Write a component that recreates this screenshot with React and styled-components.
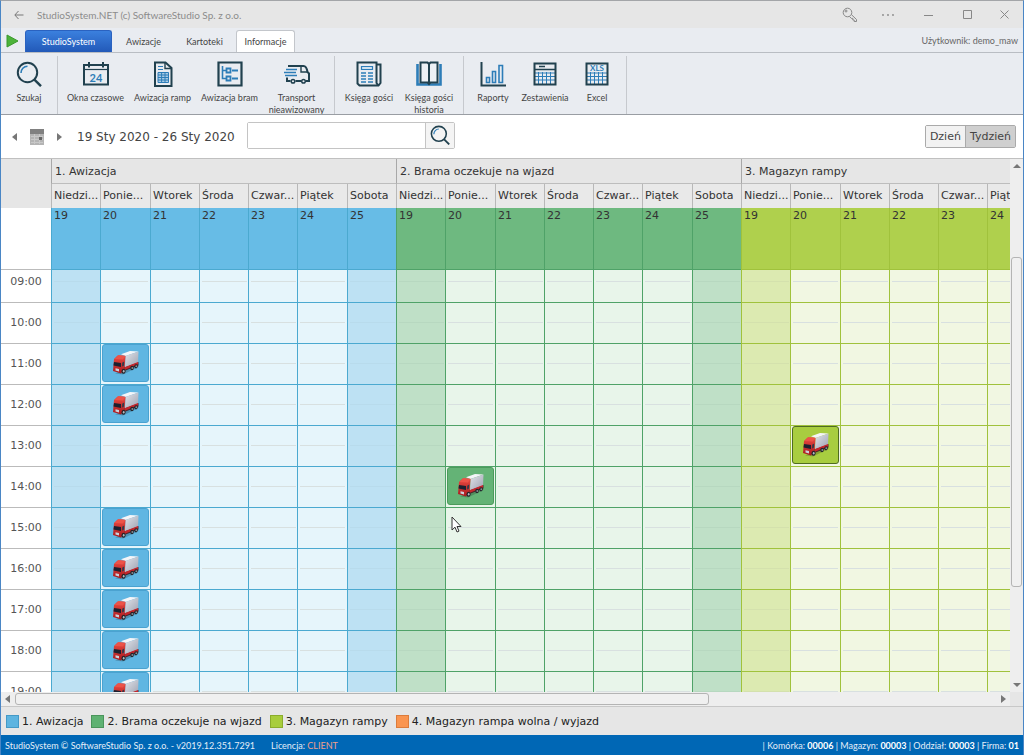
import React, { useLayoutEffect, useRef } from 'react';
import styled, { createGlobalStyle, css } from 'styled-components';

const GlobalStyle = createGlobalStyle`
  * { box-sizing: border-box; }
  body {
    margin: 0;
    font-family: "DejaVu Sans", Verdana, sans-serif;
    font-size: 11px;
    color: #333;
  }
  button, input {
    font-family: inherit;
    font-size: inherit;
    color: inherit;
    margin: 0;
    padding: 0;
  }
`;

const uiFont = css`
  font-family: Lato, "Segoe UI", sans-serif;
  font-size: 9px;
`;

const Window = styled.div`
  display: flex;
  flex-direction: column;
  height: 100vh;
  background: #fff;
  border: 1px solid #4a86c5;
  border-top-color: #a3a5a8;
  border-bottom: 0;
`;

/* title bar */

const TitleBar = styled.header`
  ${uiFont}
  display: flex;
  align-items: center;
  flex: none;
  height: 27px;
  padding: 0 0 0 9px;
  background: #e6e6e6;
  color: #8c8c8c;
`;

const TitleButton = styled.button`
  display: flex;
  align-items: center;
  justify-content: center;
  width: ${p => p.$w || 38}px;
  height: 27px;
  border: 0;
  background: none;
`;

const Title = styled.h1`
  flex: 1;
  margin: 0 0 0 10px;
  font-size: 10px;
  font-weight: 400;
`;

const TitleButtons = styled.div`
  display: flex;
`;

/* ribbon */

const TabBar = styled.nav`
  ${uiFont}
  display: flex;
  align-items: flex-end;
  gap: 2px;
  flex: none;
  height: 25px;
  padding: 0 5px;
  background: #e9ecf1;
  border-bottom: 1px solid #b9bdc3;
`;

const PlayButton = styled.button`
  width: 17px;
  height: 20px;
  border: 0;
  background: none;
  text-align: left;
`;

const Tab = styled.button`
  width: ${p => (p.$main ? 87 : 59)}px;
  height: 22px;
  border: 1px solid transparent;
  border-bottom: 0;
  border-radius: 3px 3px 0 0;
  background: none;
  color: #444;
  ${p => p.$main && css`
    background: linear-gradient(#3b80de, #2259b8);
    border-color: #2a62c0;
    color: #fff;
  `}
  ${p => p.$active && css`
    background: #fff;
    border-color: #c3c6cb;
  `}
`;

const User = styled.span`
  margin-left: auto;
  align-self: center;
  color: #666;
`;

const Ribbon = styled.div`
  ${uiFont}
  display: flex;
  flex: none;
  height: 62px;
  padding: 3px 0 0;
  overflow: hidden;
  background: #e9ecf1;
  border-bottom: 1px solid #999da3;
`;

const RibbonGroup = styled.div`
  display: flex;
  padding: 0 ${p => p.$pad}px;
  border-right: 1px solid #c6c9ce;
`;

const RibbonButton = styled.button`
  display: flex;
  flex-direction: column;
  align-items: center;
  width: ${p => p.$w}px;
  height: 60px;
  padding: 5px 0 0;
  border: 0;
  background: none;
  color: #444;
  line-height: 12px;
  svg {
    flex: none;
    margin-bottom: 5px;
  }
`;

/* date toolbar */

const Toolbar = styled.div`
  display: flex;
  align-items: center;
  flex: none;
  height: 43px;
  padding: 0 7px 0 9px;
  color: #444;
`;

const IconButton = styled.button`
  display: flex;
  align-items: center;
  justify-content: center;
  width: ${p => p.$w}px;
  height: 20px;
  border: 0;
  background: none;
`;

const Period = styled.span`
  width: 170px;
  margin-left: 13px;
  font-size: 12px;
  white-space: nowrap;
`;

const SearchBox = styled.form`
  display: flex;
  width: 208px;
  height: 27px;
  margin-bottom: 3px;
  border: 1px solid #c4c4c4;
  border-radius: 2px;
`;

const SearchInput = styled.input`
  flex: 1;
  min-width: 0;
  padding: 0 6px;
  border: 0;
  outline: 0;
`;

const SearchButton = styled.button`
  display: flex;
  align-items: center;
  justify-content: center;
  width: 29px;
  border: 0;
  border-left: 1px solid #c4c4c4;
  background: #f4f4f4;
`;

const Views = styled.div`
  display: flex;
  margin-left: auto;
  height: 23px;
  border: 1px solid #aaa;
  border-radius: 2px;
`;

const ViewButton = styled.button`
  padding: 0 4px;
  border: 0;
  background: ${p => (p.$active ? '#cfcfcf' : '#f2f2f2')};
  & + & {
    border-left: 1px solid #aaa;
  }
`;

/* scheduler */

const Scheduler = styled.main`
  position: relative;
  display: grid;
  grid-template-columns: minmax(0, 1fr) 13px;
  grid-template-rows: minmax(0, 1fr) 14px;
  flex: 1;
  min-height: 0;
  border-top: 1px solid #c0c0c0;
`;

const Panes = styled.div`
  display: flex;
  flex-direction: column;
  min-width: 0;
  overflow: hidden;
`;

const BodyPane = styled.div`
  flex: 1;
  min-height: 0;
  overflow: hidden;
`;

const Sheet = styled.table`
  table-layout: fixed;
  width: 1085px;
  border-spacing: 0;
  th, td {
    padding: 0;
    font-weight: 400;
    text-align: left;
  }
`;

const Corner = styled.th`
  background: #e6e6e6;
`;

const GroupHead = styled.th`
  height: 25px;
  background: #e6e6e6;
  border-left: 1px solid #a8a8a8;
  border-bottom: 1px solid #bdbdbd;
  && { padding: 0 3px; }
`;

const DayHead = styled.th`
  height: 24px;
  background: #e9e9e9;
  border-left: 1px solid #b8b8b8;
  white-space: nowrap;
  && { padding: 0 0 2px 2px; }
`;

const AllDay = styled.td`
  height: 62px;
  background: ${p => p.$c.solid};
  border-left: 1px solid ${p => p.$c.line};
  border-bottom: 1px solid ${p => p.$c.line};
  vertical-align: top;
  line-height: 15px;
  && { padding: 0 2px; }
`;

const AllDayGutter = styled.td`
  border-bottom: 1px solid #bbb;
`;

const Hour = styled.th`
  height: 41px;
  border-bottom: 1px solid #bbb;
  color: #555;
  && {
    padding-bottom: 2px;
    text-align: center;
  }
`;

const Slot = styled.td`
  height: 41px;
  vertical-align: top;
  border-left: 1px solid ${p => p.$c.line};
  border-bottom: 1px solid ${p => p.$c.line};
  background:
    linear-gradient(${p => (p.$weekend ? p.$c.faint : '#d8e0e0')} 1px, transparent 1px) 2px 19px / 45px 22px no-repeat,
    ${p => (p.$weekend ? p.$c.weekend : p.$c.weekday)};
`;

const Event = styled.button`
  display: flex;
  align-items: center;
  justify-content: center;
  width: 47px;
  height: 38px;
  margin: 0 1px;
  border: 1px solid ${p => p.$c.eventLine};
  border-radius: 3px;
  background: ${p => p.$c.event};
`;

const ScrollBar = styled.div`
  display: flex;
  flex-direction: ${p => (p.$vertical ? 'column' : 'row')};
  align-items: center;
  background: #eee;
`;

const ScrollArrow = styled.button`
  display: flex;
  align-items: center;
  justify-content: center;
  flex: none;
  width: 14px;
  height: 14px;
  border: 0;
  background: none;
`;

const Gap = styled.span`
  flex: ${p => p.$n};
`;

const Thumb = styled.span`
  flex: ${p => p.$n};
  align-self: stretch;
  margin: ${p => (p.$vertical ? '0 1px' : '1px 0')};
  border: 1px solid #b4b4b4;
  border-radius: 3px;
  background: #f0f0f0;
`;

const ScrollCorner = styled.div`
  background: #e6e6e6;
`;

const Pointer = styled.svg`
  position: absolute;
  left: 450px;
  top: 357px;
`;

/* bottom */

const Legend = styled.ul`
  display: flex;
  align-items: center;
  gap: 8px;
  flex: none;
  height: 29px;
  margin: 0;
  padding: 0 5px;
  list-style: none;
  background: #e6e6e6;
  border-top: 1px solid #c8c8c8;
  color: #222;
`;

const LegendItem = styled.li`
  display: flex;
  align-items: center;
  gap: 3px;
`;

const Swatch = styled.span`
  width: 13px;
  height: 13px;
  border: 1px solid ${p => p.$line};
  background: ${p => p.$fill};
`;

const StatusBar = styled.footer`
  ${uiFont}
  display: flex;
  align-items: center;
  gap: 16px;
  flex: none;
  height: 20px;
  padding: 0 4px;
  background: #0067b5;
  color: #e4eef8;
`;

const License = styled.b`
  font-weight: 400;
  color: #f0a08c;
`;

const Company = styled.span`
  margin-left: auto;
  b {
    font-weight: 700;
    color: #fff;
  }
`;

const palettes = [
  { solid: '#67bce6', weekday: '#e6f5fb', weekend: '#bde1f3', faint: '#b8dbec', line: '#4ba9d0', event: '#60b6e2', eventLine: '#4ba2d0' },
  { solid: '#6eb980', weekday: '#e8f5ea', weekend: '#bfe0c7', faint: '#b7d8c0', line: '#4fa268', event: '#64b376', eventLine: '#4c9a5c' },
  { solid: '#afd04d', weekday: '#f1f7e2', weekend: '#dceab1', faint: '#d4e1ad', line: '#a0c23c', event: '#a8cd40', eventLine: '#4f6b22' },
];

const groups = ['1. Awizacja', '2. Brama oczekuje na wjazd', '3. Magazyn rampy'];

const days = [
  { name: 'Niedzi...', date: 19, width: 49, weekend: true },
  { name: 'Ponie...', date: 20, width: 50 },
  { name: 'Wtorek', date: 21, width: 49 },
  { name: 'Środa', date: 22, width: 49 },
  { name: 'Czwar...', date: 23, width: 49 },
  { name: 'Piątek', date: 24, width: 50 },
  { name: 'Sobota', date: 25, width: 49, weekend: true },
];

const hours = [9, 10, 11, 12, 13, 14, 15, 16, 17, 18, 19];

// hours of the Monday deliveries, per group
const deliveries = [[11, 12, 15, 16, 17, 18, 19], [14], [13]];

const legend = [
  ['1. Awizacja', '#5db4e0', '#4499c6'],
  ['2. Brama oczekuje na wjazd', '#5fb272', '#4a955b'],
  ['3. Magazyn rampy', '#a8cd3c', '#8bad2c'],
  ['4. Magazyn rampa wolna / wyjazd', '#fa9550', '#dc7c3c'],
];

const dark = '#21414f';
const blue = '#2d7db8';

const SearchIcon = ({ size = 26 }) => (
  <svg width={size} height={size} viewBox="0 0 26 26" fill="none">
    <circle cx="11.5" cy="11.5" r="9.7" stroke={dark} strokeWidth="2" />
    <path d="M5 12a6.6 6.6 0 0 1 6.5-6.8" stroke={blue} strokeWidth="1.6" />
    <path d="M18.4 18.6L25 25.2" stroke={dark} strokeWidth="2.4" />
  </svg>
);

const CalendarIcon = () => (
  <svg width="26" height="26" viewBox="0 0 26 26" fill="none">
    <path d="M1 4h24v19.5H1z" stroke={dark} strokeWidth="2" />
    <path d="M1 8.5h24" stroke={dark} strokeWidth="1.2" />
    <path d="M6 1v5.5M20 1v5.5" stroke={dark} strokeWidth="2" />
    <text x="13" y="20.5" textAnchor="middle" fontSize="11" fontWeight="700" fill={blue}>24</text>
  </svg>
);

const DocumentIcon = () => (
  <svg width="26" height="26" viewBox="0 0 26 26" fill="none">
    <path d="M5 1.5h10.500l6 5.500V25H5z" stroke={dark} strokeWidth="2" />
    <path d="M15 2v5.500h6" stroke={dark} strokeWidth="1.4" />
    <path d="M8 5.5h5M8 8.5h5" stroke={blue} strokeWidth="1.2" />
    <path d="M8 11.5h10.500v10H8zM8 14h10.500M8 16.5h10.500M8 19h10.500M11.6 11.5v10M15 11.5v10" fill="#a9cbe4" stroke={blue} strokeWidth="1" />
  </svg>
);

const TreeIcon = () => (
  <svg width="26" height="26" viewBox="0 0 26 26" fill="none">
    <path d="M1.5 1.5h23v23h-23z" stroke={dark} strokeWidth="2.2" />
    <path d="M5.5 5v12.5H9M5.5 9.5H9" stroke={blue} strokeWidth="1.6" />
    <path d="M9.5 7.5h4v4h-4zM9.5 15.5h4v4h-4z" stroke={blue} strokeWidth="1.8" />
    <path d="M15 9.5h6M15 17.5h6" stroke={blue} strokeWidth="1.8" />
  </svg>
);

const VanIcon = () => (
  <svg width="26" height="26" viewBox="0 0 26 26" fill="none">
    <path d="M4 5h15.5c2.5 0 3.5 3 4 6l1.5 1.5V20h-3M3 16.5V20h3.5M11.5 20H17" stroke={dark} strokeWidth="2" />
    <path d="M17 5.5V11h6.5" stroke={dark} strokeWidth="1.4" />
    <circle cx="9" cy="20.2" r="1.8" stroke={dark} strokeWidth="1.5" />
    <circle cx="19.5" cy="20.2" r="1.8" stroke={dark} strokeWidth="1.5" />
    <path d="M2 8.5h11M0 11.5h12M1 14.5h12" stroke={blue} strokeWidth="1.6" />
  </svg>
);

const NewsIcon = () => (
  <svg width="26" height="26" viewBox="0 0 26 26" fill="none">
    <path d="M20.5 3.5h4V22l-2 2.5h-19l-2-2v-21h19V22l2 2.5" stroke={dark} strokeWidth="2" />
    <path d="M5.5 5.5h11v3h-11z" stroke={blue} strokeWidth="1.2" fill="#d0e2f0" />
    <path d="M5 12h5M12 12h5M5 15h5M12 15h5M5 18h5M12 18h5M5 21h5M12 21h5" stroke={blue} strokeWidth="1.4" />
  </svg>
);

const BookIcon = () => (
  <svg width="26" height="26" viewBox="0 0 26 26" fill="none">
    <path d="M1.5 3v20.5h23V3" stroke={blue} strokeWidth="2.6" />
    <path d="M4.5 1.5h7L13 3l1.5-1.5h7v20h-7L13 23l-1.5-1.5h-7zM13 3v20" stroke={dark} strokeWidth="2" fill="#edf1f5" />
  </svg>
);

const ChartIcon = () => (
  <svg width="26" height="26" viewBox="0 0 26 26" fill="none">
    <path d="M1.5 1v23.5H26" stroke={dark} strokeWidth="2" />
    <path d="M6.5 16.5h3v5h-3zM12.5 10.5h3v11h-3zM19 4.5h3.5v17H19z" stroke={blue} strokeWidth="1.6" />
  </svg>
);

const TableIcon = ({ xls }) => (
  <svg width="26" height="26" viewBox="0 0 26 26" fill="none">
    <path d="M3 12h20M3 15.5h20M3 19h20M6.5 11v12M10.5 11v12M14.5 11v12M18.5 11v12" stroke={blue} strokeWidth="1" />
    <path d="M2.5 2.5h21v21h-21z" stroke={dark} strokeWidth="2" />
    {xls
      ? <text x="13" y="10" textAnchor="middle" fontSize="8" fontWeight="700" fill={blue}>XLS</text>
      : <path d="M3 8.5h20M7 5.5h6" stroke={dark} strokeWidth="1.4" />}
  </svg>
);

const TruckIcon = () => (
  <svg width="28" height="26" viewBox="0 0 28 26">
    <defs>
      <linearGradient id="trailer" x1="0" y1="0" x2="1" y2="1">
        <stop offset="0" stopColor="#e2e4ea" />
        <stop offset="1" stopColor="#9da2b1" />
      </linearGradient>
      <linearGradient id="cab" x1="0" y1="0" x2="0" y2="1">
        <stop offset="0" stopColor="#ea4a40" />
        <stop offset="1" stopColor="#a81a20" />
      </linearGradient>
    </defs>
    <path d="M3 23.5l8 1 15.500-7.500-1-3z" fill="#000" opacity=".2" />
    <path d="M11 21.500l15.500-6V12L12 17z" fill="#43262b" />
    <path d="M9 4.200L18 1l8.500.6L13.500 6z" fill="#f4f5f8" />
    <path d="M13.500 6L26.500 1.600 26 12.500l-13 4.800z" fill="url(#trailer)" />
    <path d="M12.500 17.300L26 12v2.200L12.500 20z" fill="#c4262c" />
    <path d="M2 9l3.500-3.500L13.500 6l-1 13-3.500 4.500-8-2.500z" fill="url(#cab)" />
    <path d="M2.500 9L6.500 5l7 .8-2.500 3.700z" fill="#ec5348" />
    <path d="M2 12l7 1v4l-7.500-1.500z" fill="#1b2130" />
    <path d="M10.200 12.800l2-1.200-.2 4-1.900 1z" fill="#323a49" />
    <path d="M3.500 18.300l3.500.8v2.300l-3.500-.9z" fill="#ccd0da" />
    <ellipse cx="11.500" cy="21.300" rx="2" ry="2.500" fill="#22242a" />
    <ellipse cx="11.700" cy="21.300" rx=".9" ry="1.200" fill="#b5b8bf" />
    <ellipse cx="20" cy="18" rx="1.700" ry="2.200" fill="#22242a" />
    <ellipse cx="24" cy="16.300" rx="1.600" ry="2.100" fill="#22242a" />
    <ellipse cx="20.200" cy="18" rx=".7" ry="1" fill="#a5a8b0" />
    <ellipse cx="24.200" cy="16.300" rx=".7" ry="1" fill="#a5a8b0" />
  </svg>
);

const arrowPaths = {
  left: 'M6 0v8L1 4z',
  right: 'M2 0v8l5-4z',
  up: 'M0 6h8L4 2z',
  down: 'M0 2h8L4 6z',
};

const Arrow = ({ dir }) => (
  <svg width="8" height="8" viewBox="0 0 8 8"><path d={arrowPaths[dir]} fill="#777" /></svg>
);

const ribbon = [
  { pad: 0, w: 56, items: [['Szukaj', SearchIcon]] },
  { pad: 4, w: 67, items: [['Okna czasowe', CalendarIcon], ['Awizacja ramp', DocumentIcon], ['Awizacja bram', TreeIcon], ['Transport nieawizowany', VanIcon]] },
  { pad: 4, w: 60, items: [['Księga gości', NewsIcon], ['Księga gości historia', BookIcon]] },
  { pad: 3, w: 52, items: [['Raporty', ChartIcon], ['Zestawienia', TableIcon], ['Excel', () => <TableIcon xls />]] },
];

const Columns = () => (
  <colgroup>
    <col width="50" />
    {groups.map(g => days.map(d => <col key={g + d.date} width={d.width} />))}
  </colgroup>
);

const Header = () => (
  <Sheet>
    <Columns />
    <thead>
      <tr>
        <Corner rowSpan={2} />
        {groups.map(g => <GroupHead key={g} colSpan={7}>{g}</GroupHead>)}
      </tr>
      <tr>
        {groups.map(g => days.map(d => <DayHead key={g + d.date}>{d.name}</DayHead>))}
      </tr>
    </thead>
    <tbody>
      <tr>
        <AllDayGutter />
        {groups.map((g, i) => days.map(d => (
          <AllDay key={g + d.date} $c={palettes[i]}>{d.date}</AllDay>
        )))}
      </tr>
    </tbody>
  </Sheet>
);

const Body = () => {
  const pane = useRef(null);

  useLayoutEffect(() => {
    pane.current.scrollTop = 8;
  }, []);

  return (
    <BodyPane ref={pane}>
      <Sheet>
        <Columns />
        <tbody>
          {hours.map(h => (
            <tr key={h}>
              <Hour scope="row">{String(h).padStart(2, '0')}:00</Hour>
              {groups.map((g, i) => days.map(d => (
                <Slot key={g + d.date} $c={palettes[i]} $weekend={d.weekend}>
                  {d.date === 20 && deliveries[i].includes(h) && (
                    <Event $c={palettes[i]} aria-label={g}><TruckIcon /></Event>
                  )}
                </Slot>
              )))}
            </tr>
          ))}
        </tbody>
      </Sheet>
    </BodyPane>
  );
};

export default function App() {
  return (
    <Window>
      <GlobalStyle />
      <TitleBar>
        <TitleButton $w={17} aria-label="Wstecz">
          <svg width="10" height="10" viewBox="0 0 10 10" fill="none" stroke="#777">
            <path d="M9.5 5H1M4.5 1L.8 5l3.7 4" />
          </svg>
        </TitleButton>
        <Title>StudioSystem.NET (c) SoftwareStudio Sp. z o.o.</Title>
        <TitleButtons>
          <TitleButton aria-label="Klucz">
            <svg width="16" height="16" viewBox="0 0 16 16" fill="none" stroke="#888">
              <circle cx="5.5" cy="5.5" r="4.3" />
              <circle cx="4" cy="4" r="1" />
              <path d="M9.3 7.5l5.2 5v2h-2.3V13h-1.4v-1.600H9.300L7.500 9.500" />
            </svg>
          </TitleButton>
          <TitleButton aria-label="Więcej">
            <svg width="14" height="4" viewBox="0 0 14 4" fill="#888">
              <circle cx="2" cy="2" r=".9" /><circle cx="7" cy="2" r=".9" /><circle cx="12" cy="2" r=".9" />
            </svg>
          </TitleButton>
          <TitleButton $w={42} aria-label="Minimalizuj">
            <svg width="9" height="9" viewBox="0 0 9 9" stroke="#888"><path d="M0 5.5h9" /></svg>
          </TitleButton>
          <TitleButton $w={36} aria-label="Maksymalizuj">
            <svg width="9" height="9" viewBox="0 0 9 9" fill="none" stroke="#888"><path d="M.5.5h8v8h-8z" /></svg>
          </TitleButton>
          <TitleButton aria-label="Zamknij">
            <svg width="9" height="9" viewBox="0 0 9 9" stroke="#888"><path d="M.5.5l8 8M8.5.5l-8 8" /></svg>
          </TitleButton>
        </TitleButtons>
      </TitleBar>

      <TabBar>
        <PlayButton aria-label="Start">
          <svg width="13" height="14" viewBox="0 0 13 14">
            <path d="M1 1l11 6L1 13z" fill="#4db33a" stroke="#3a9a2c" />
          </svg>
        </PlayButton>
        <Tab $main>StudioSystem</Tab>
        <Tab>Awizacje</Tab>
        <Tab>Kartoteki</Tab>
        <Tab $active>Informacje</Tab>
        <User>Użytkownik: demo_maw</User>
      </TabBar>

      <Ribbon>
        {ribbon.map(group => (
          <RibbonGroup key={group.w} $pad={group.pad}>
            {group.items.map(([label, Icon]) => (
              <RibbonButton key={label} $w={group.w}><Icon />{label}</RibbonButton>
            ))}
          </RibbonGroup>
        ))}
      </Ribbon>

      <Toolbar>
        <IconButton $w={10} aria-label="Poprzedni tydzień"><Arrow dir="left" /></IconButton>
        <IconButton $w={34} aria-label="Kalendarz">
          <svg width="14" height="16" viewBox="0 0 14 16">
            <path d="M0 0h14v16H0z" fill="#b4b4b4" />
            <path d="M0 0h14v5H0z" fill="#808080" />
            <path d="M1 7.5h12M1 10.5h12M1 13.5h12M4.5 5v10M9.5 5v10" stroke="#c8c8c8" />
            <path d="M9 8h3v3H9z" fill="#666" />
          </svg>
        </IconButton>
        <IconButton $w={10} aria-label="Następny tydzień"><Arrow dir="right" /></IconButton>
        <Period>19 Sty 2020 - 26 Sty 2020</Period>
        <SearchBox>
          <SearchInput type="text" aria-label="Szukaj" />
          <SearchButton type="button" aria-label="Szukaj"><SearchIcon size={20} /></SearchButton>
        </SearchBox>
        <Views>
          <ViewButton>Dzień</ViewButton>
          <ViewButton $active>Tydzień</ViewButton>
        </Views>
      </Toolbar>

      <Scheduler>
        <Panes>
          <Header />
          <Body />
        </Panes>
        <ScrollBar $vertical>
          <ScrollArrow aria-label="W górę"><Arrow dir="up" /></ScrollArrow>
          <Gap $n={85} />
          <Thumb $vertical $n={330} />
          <Gap $n={92} />
          <ScrollArrow aria-label="W dół"><Arrow dir="down" /></ScrollArrow>
        </ScrollBar>
        <ScrollBar>
          <ScrollArrow aria-label="W lewo"><Arrow dir="left" /></ScrollArrow>
          <Thumb $n={694} />
          <Gap $n={288} />
          <ScrollArrow aria-label="W prawo"><Arrow dir="right" /></ScrollArrow>
        </ScrollBar>
        <ScrollCorner />
        <Pointer width="11" height="17" viewBox="0 0 11 17">
          <path d="M1 1v13l3-2.8L6 16l2-.9-2-4.600h4z" fill="#fff" stroke="#333" />
        </Pointer>
      </Scheduler>

      <Legend>
        {legend.map(([label, fill, line]) => (
          <LegendItem key={label}><Swatch $fill={fill} $line={line} />{label}</LegendItem>
        ))}
      </Legend>

      <StatusBar>
        <span>StudioSystem © SoftwareStudio Sp. z o.o. - v2019.12.351.7291</span>
        <span>Licencja: <License>CLIENT</License></span>
        <Company>
          | Komórka: <b>00006</b> | Magazyn: <b>00003</b> | Oddział: <b>00003</b> | Firma: <b>01</b>
        </Company>
      </StatusBar>
    </Window>
  );
}
